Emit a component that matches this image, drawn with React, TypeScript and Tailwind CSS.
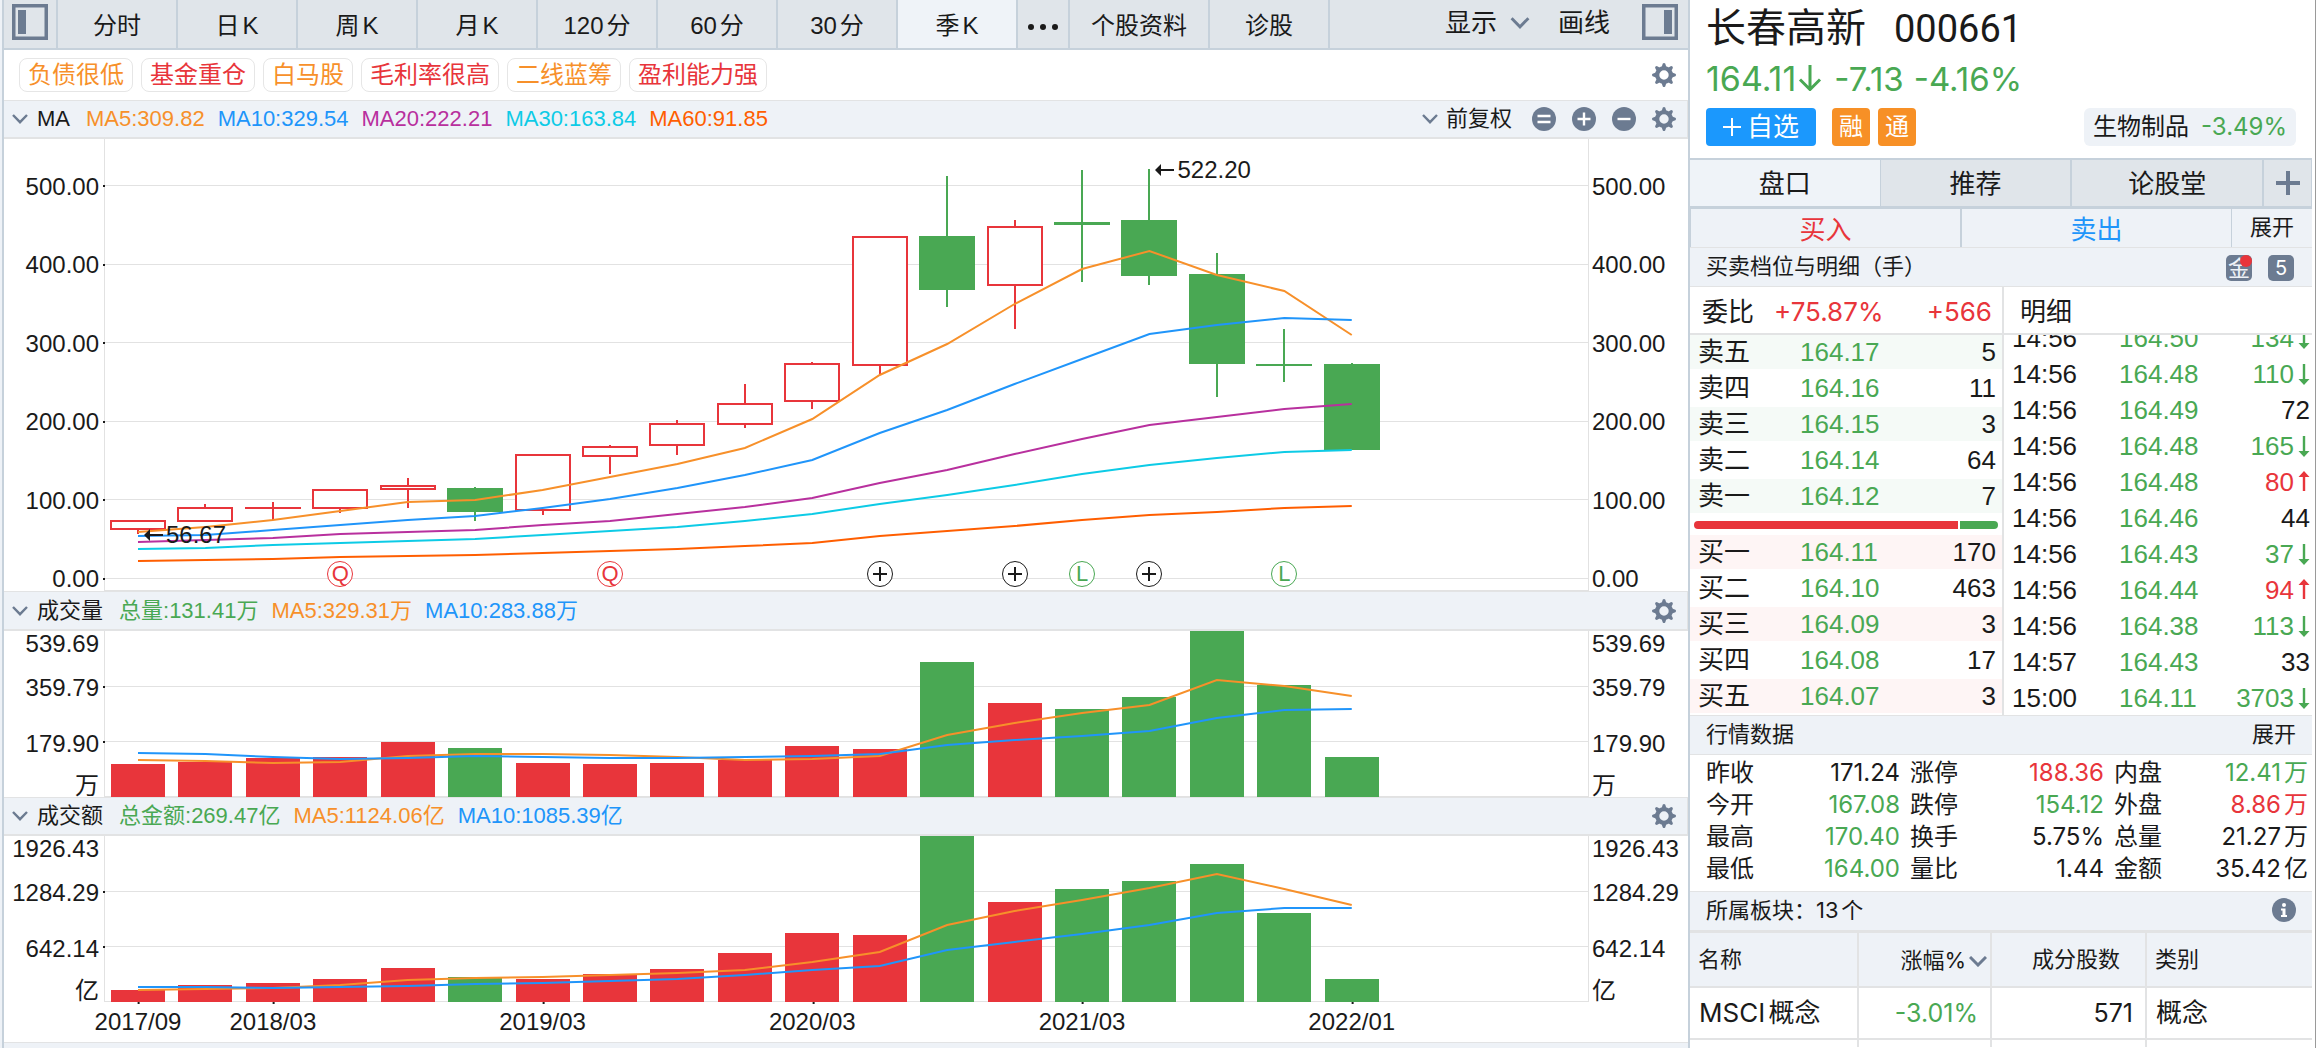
import React from "react";

const RED = "#e8353b";
const GREEN = "#49a853";
const ORANGE = "#f7902a";
const BLUE = "#2095fa";
const PURPLE = "#b8309e";
const CYAN = "#0dcbe6";
const DEEP = "#ff5e00";

const PLOT_W = 1484;
const xAt = (i: number) => 34 + i * 67.43;
const pct = (i: number) => `${(xAt(i) / PLOT_W) * 100}%`;

/* ---------- data ---------- */

// [body top, body bottom, high, low, rising]
const candles: [number, number, number, number, boolean][] = [
  [381, 391, 381, 395, true],
  [368, 383, 365, 383, true],
  [368, 370, 363, 381, true],
  [350, 370, 350, 374, true],
  [346, 351, 339, 369, true],
  [349, 373, 348, 382, false],
  [315, 372, 315, 376, true],
  [307, 318, 306, 335, true],
  [284, 307, 281, 316, true],
  [264, 286, 245, 289, true],
  [224, 263, 223, 270, true],
  [97, 227, 97, 235, true],
  [97, 151, 37, 168, false],
  [87, 147, 81, 190, true],
  [83, 86, 31, 143, false],
  [81, 137, 30, 146, false],
  [135, 225, 114, 258, false],
  [225, 227, 190, 243, false],
  [225, 311, 224, 311, false],
];

const priceLines: [string, number[]][] = [
  [ORANGE, [393, 388, 381, 372, 363, 361, 351, 338, 325, 309, 280, 236, 205, 165, 130, 112, 136, 152, 196]],
  [BLUE, [397, 396, 391, 386, 381, 377, 369, 360, 349, 336, 321, 294, 271, 245, 220, 195, 186, 179, 181]],
  [PURPLE, [403, 401, 399, 395, 393, 391, 386, 382, 375, 368, 359, 344, 331, 315, 300, 286, 278, 270, 265]],
  [CYAN, [410, 409, 406, 404, 402, 400, 396, 392, 388, 382, 375, 365, 356, 346, 335, 326, 319, 313, 311]],
  [DEEP, [422, 421, 420, 418, 417, 416, 414, 412, 410, 407, 404, 397, 392, 387, 381, 376, 373, 369, 367]],
];

const rising = candles.map((c) => c[4]);
const volumeTops = [133, 131, 127, 126, 111, 117, 132, 133, 132, 129, 115, 118, 31, 72, 78, 66, 0, 54, 126];
const volumeLines: [string, number[]][] = [
  [ORANGE, [129, 130, 132, 131, 125, 123, 123, 124, 126, 129, 128, 125, 104, 92, 82, 74, 49, 55, 65]],
  [BLUE, [122, 123, 126, 128, 127, 125, 126, 127, 127, 126, 125, 123, 114, 109, 105, 100, 87, 79, 78]],
];
const amountTops = [154, 149, 147, 143, 132, 141, 143, 138, 133, 117, 97, 99, 0, 66, 53, 45, 28, 77, 143];
const amountLines: [string, number[]][] = [
  [ORANGE, [154, 153, 152, 149, 144, 142, 141, 139, 137, 134, 126, 116, 89, 75, 64, 52, 38, 53, 69]],
  [BLUE, [151, 151, 152, 151, 150, 148, 147, 145, 143, 139, 134, 130, 114, 106, 98, 89, 77, 72, 72]],
];

const dates: [number, string][] = [
  [0, "2017/09"],
  [2, "2018/03"],
  [6, "2019/03"],
  [10, "2020/03"],
  [14, "2021/03"],
  [18, "2022/01"],
];

const marks: [number, "Q" | "+" | "L"][] = [
  [3, "Q"],
  [7, "Q"],
  [11, "+"],
  [13, "+"],
  [14, "L"],
  [15, "+"],
  [17, "L"],
];

const sells = [
  ["卖五", "164.17", "5"],
  ["卖四", "164.16", "11"],
  ["卖三", "164.15", "3"],
  ["卖二", "164.14", "64"],
  ["卖一", "164.12", "7"],
];
const buys = [
  ["买一", "164.11", "170"],
  ["买二", "164.10", "463"],
  ["买三", "164.09", "3"],
  ["买四", "164.08", "17"],
  ["买五", "164.07", "3"],
];
const ticks: [string, string, string, "" | "up" | "down"][] = [
  ["14:56", "164.50", "134", "down"],
  ["14:56", "164.48", "110", "down"],
  ["14:56", "164.49", "72", ""],
  ["14:56", "164.48", "165", "down"],
  ["14:56", "164.48", "80", "up"],
  ["14:56", "164.46", "44", ""],
  ["14:56", "164.43", "37", "down"],
  ["14:56", "164.44", "94", "up"],
  ["14:56", "164.38", "113", "down"],
  ["14:57", "164.43", "33", ""],
  ["15:00", "164.11", "3703", "down"],
];
const K = "text-[#1a1a1a]";
const R = "text-[#e8353b]";
const G = "text-[#49a853]";
const quotes: [string, string, string][] = [
  ["昨收", "171.24", K],
  ["涨停", "188.36", R],
  ["内盘", "12.41万", G],
  ["今开", "167.08", G],
  ["跌停", "154.12", G],
  ["外盘", "8.86万", R],
  ["最高", "170.40", G],
  ["换手", "5.75%", K],
  ["总量", "21.27万", K],
  ["最低", "164.00", G],
  ["量比", "1.44", K],
  ["金额", "35.42亿", K],
];

/* ---------- icons ---------- */

function Gear({ label }: { label: string }) {
  return (
    <button type="button" aria-label={label} className="size-6 shrink-0 text-[#6c7b91]">
      <svg viewBox="0 0 24 24" className="size-6" fill="none" stroke="currentColor">
        <circle cx="12" cy="12" r="6.8" strokeWidth="4.2" />
        {[0, 45, 90, 135, 180, 225, 270, 315].map((a) => (
          <path key={a} d="M9.6 4 10.8 0.6 Q12 -0.6 13.2 0.6 L14.4 4Z" fill="currentColor" stroke="none" transform={`rotate(${a} 12 12)`} />
        ))}
      </svg>
    </button>
  );
}

function Chevron({ big }: { big?: boolean }) {
  return (
    <svg
      viewBox="0 0 16 10"
      className={big ? "h-3 w-5 text-[#6c7b91]" : "h-[10px] w-4 text-[#6c7b91]"}
      fill="none"
      stroke="currentColor"
      strokeWidth="2.4"
    >
      <path d="M1 1 8 8.2 15 1" />
    </svg>
  );
}

function Round({ d, label }: { d: string; label: string }) {
  return (
    <button type="button" aria-label={label} className="size-6">
      <svg viewBox="0 0 24 24" className="size-6">
        <circle cx="12" cy="12" r="12" fill="#6c7b91" />
        <path d={d} stroke="#fff" strokeWidth="2.4" />
      </svg>
    </button>
  );
}

function PanelIcon({ right }: { right?: boolean }) {
  return (
    <svg viewBox="0 0 36 36" className="size-9">
      <rect x="1.75" y="1.75" width="32.5" height="32.5" fill="none" stroke="#6c7b91" strokeWidth="3.5" />
      <rect x={right ? 22 : 6} y="6" width="8" height="24" fill="#6c7b91" />
    </svg>
  );
}

function TickArrow({ up }: { up: boolean }) {
  return (
    <svg viewBox="0 0 12 22" className="ml-1 h-[22px] w-3 shrink-0" fill="currentColor" role="img" aria-label={up ? "升" : "降"}>
      <path d={up ? "M6 0 11.5 6H7.2V20H4.8V6H0.5Z" : "M6 22 11.5 16H7.2V1H4.8V16H0.5Z"} />
    </svg>
  );
}

/* ---------- chart ---------- */

function Series({ lines }: { lines: [string, number[]][] }) {
  return (
    <>
      {lines.map(([color, ys]) => (
        <polyline
          key={color}
          points={ys.map((y, i) => `${xAt(i)},${y}`).join(" ")}
          fill="none"
          stroke={color}
          strokeWidth="2"
          vectorEffect="non-scaling-stroke"
        />
      ))}
    </>
  );
}

function Frame({ height, grid }: { height: number; grid: number[] }) {
  return (
    <g shapeRendering="crispEdges">
      {grid.map((y) => (
        <rect key={y} x="0" y={y} width={PLOT_W} height="1" fill="#e2e2e2" />
      ))}
      <rect x="0" y="0" width="1" height={height} fill="#e2e2e2" />
      <rect x={PLOT_W} y="0" width="1" height={height} fill="#e2e2e2" />
      <rect x="0" y={height - 1} width={PLOT_W} height="1" fill="#e2e2e2" />
      {grid.map((y) => (
        <rect key={y} x="-1" y={y} width="2" height="2" fill="#1a1a1a" />
      ))}
    </g>
  );
}

function CandlePlot() {
  return (
    <div className="relative h-[452px] min-w-0 flex-1">
      <svg viewBox="0 0 1484 452" preserveAspectRatio="none" className="size-full overflow-visible">
        <Frame height={452} grid={[46, 125, 203, 282, 360, 439]} />
        <g shapeRendering="crispEdges">
          {candles.map(([top, bottom, high, low, up], i) => {
            const x = Math.round(xAt(i));
            const color = up ? RED : GREEN;
            const thin = bottom - top <= 3;
            return (
              <g key={i}>
                <rect x={x - 1} y={high} width="2" height={top - high} fill={color} />
                <rect x={x - 1} y={bottom} width="2" height={low - bottom} fill={color} />
                {up && !thin ? (
                  <rect x={x - 27} y={top + 1} width="54" height={bottom - top - 2} fill="#fff" stroke={color} strokeWidth="2" />
                ) : (
                  <rect x={x - 28} y={top} width="56" height={bottom - top} fill={color} />
                )}
              </g>
            );
          })}
        </g>
        <Series lines={priceLines} />
      </svg>
      {marks.map(([i, kind]) => (
        <span
          key={i}
          style={{ left: pct(i) }}
          className={`absolute top-[422px] flex size-[26px] -translate-x-1/2 items-center justify-center rounded-full border bg-white text-[22px] leading-6 ${
            kind === "Q" ? "border-[#e8353b] text-[#e8353b]" : kind === "L" ? "border-[#49a853] text-[#49a853]" : "border-[#1a1a1a] text-[#1a1a1a]"
          }`}
        >
          {kind === "+" ? (
            <svg viewBox="0 0 14 14" className="size-[14px]" stroke="currentColor" strokeWidth="2">
              <path d="M0 7H14M7 0V14" />
            </svg>
          ) : (
            kind
          )}
        </span>
      ))}
      <Extreme index={0} top="top-[384px]" value="56.67" />
      <Extreme index={15} top="top-[19px]" value="522.20" />
    </div>
  );
}

function Extreme({ index, top, value }: { index: number; top: string; value: string }) {
  return (
    <span style={{ left: pct(index) }} className={`absolute ${top} flex items-center gap-[2px] pl-[6px] text-2xl leading-6`}>
      <svg viewBox="0 0 20 12" className="h-3 w-5" fill="#1a1a1a">
        <path d="M0 6 6 0V5H19V7H6V12Z" />
      </svg>
      {value}
    </span>
  );
}

function BarPlot({ tops, lines }: { tops: number[]; lines: [string, number[]][] }) {
  return (
    <div className="h-[166px] min-w-0 flex-1">
      <svg viewBox="0 0 1484 166" preserveAspectRatio="none" className="size-full overflow-visible">
        <Frame height={166} grid={[55, 110]} />
        <g shapeRendering="crispEdges">
          {tops.map((y, i) => (
            <rect key={i} x={Math.round(xAt(i)) - 27} y={y} width="54" height={166 - y} fill={rising[i] ? RED : GREEN} />
          ))}
        </g>
        <Series lines={lines} />
      </svg>
    </div>
  );
}

function PriceAxis({ left }: { left?: boolean }) {
  return (
    <div className={`flex w-[100px] shrink-0 flex-col justify-between pt-9 text-2xl leading-6 ${left ? "pr-[5px] text-right" : "pl-1"}`}>
      {["500.00", "400.00", "300.00", "200.00", "100.00", "0.00"].map((v) => (
        <span key={v}>{v}</span>
      ))}
    </div>
  );
}

function BarAxis({ labels, left }: { labels: string[]; left?: boolean }) {
  return (
    <div className={`flex h-[166px] w-[100px] shrink-0 flex-col pt-[1px] text-2xl leading-6 ${left ? "pr-[5px] text-right" : "pl-1"}`}>
      <span>{labels[0]}</span>
      <span className="mt-5">{labels[1]}</span>
      <span className="mt-8">{labels[2]}</span>
      <span className="mt-[18px]">{labels[3]}</span>
    </div>
  );
}

function ChartHeader({
  title,
  items,
  children,
  tall,
}: {
  title: string;
  items: [string, string][];
  children?: React.ReactNode;
  tall?: boolean;
}) {
  return (
    <div
      className={`flex items-center border-t border-r border-b-2 border-[#e2e3e4] bg-[#eef2f7] pr-[11px] pl-2 text-[22px] leading-7 ${
        tall ? "h-10" : "h-[39px]"
      }`}
    >
      <button type="button" className="flex items-center gap-[9px]">
        <Chevron />
        <span>{title}</span>
      </button>
      <div className="ml-4 flex gap-[13px]">
        {items.map(([text, color]) => (
          <span key={text} className={color}>
            {text}
          </span>
        ))}
      </div>
      <div className="ml-auto flex items-center gap-4">
        {children}
        <Gear label={`${title}设置`} />
      </div>
    </div>
  );
}

/* ---------- left side ---------- */

function TopTabs() {
  const tabs = ["分时", "日K", "周K", "月K", "120分", "60分", "30分", "季K"];
  return (
    <nav className="flex h-[50px] border-b-2 border-[#c6d1db] bg-[#e0e5ea] text-2xl [text-autospace:normal]">
      <button type="button" aria-label="左侧栏" className="flex w-[54px] shrink-0 items-start border-r-2 border-[#c6d1db] pt-1 pl-2">
        <PanelIcon />
      </button>
      {tabs.map((t) => (
        <button key={t} type="button" className={`w-[120px] border-r-2 border-[#c6d1db] pt-[3px] ${t === "季K" ? "bg-[#eff3f8]" : ""}`}>
          {t}
        </button>
      ))}
      <button type="button" aria-label="更多" className="flex w-[52px] items-center justify-center gap-[6px] border-r-2 border-[#c6d1db] pt-[6px]">
        <i className="size-[6px] rounded-full bg-[#1a1a1a]" />
        <i className="size-[6px] rounded-full bg-[#1a1a1a]" />
        <i className="size-[6px] rounded-full bg-[#1a1a1a]" />
      </button>
      <button type="button" className="w-[140px] border-r-2 border-[#c6d1db] pt-[3px]">
        个股资料
      </button>
      <button type="button" className="w-[120px] border-r-2 border-[#c6d1db] pt-[3px]">
        诊股
      </button>
      <div className="ml-auto flex items-start pr-[10px] text-[26px] leading-[46px]">
        <button type="button" className="flex items-center gap-[13px]">
          显示
          <Chevron big />
        </button>
        <button type="button" className="ml-7">
          画线
        </button>
        <button type="button" aria-label="右侧栏" className="mt-1 ml-8">
          <PanelIcon right />
        </button>
      </div>
    </nav>
  );
}

function Tags() {
  const tags: [string, string][] = [
    ["负债很低", "text-[#f7902a]"],
    ["基金重仓", R],
    ["白马股", "text-[#f7902a]"],
    ["毛利率很高", R],
    ["二线蓝筹", "text-[#f7902a]"],
    ["盈利能力强", R],
  ];
  return (
    <div className="flex h-[50px] items-center gap-2 pr-3 pl-[15px]">
      {tags.map(([t, c]) => (
        <span key={t} className={`rounded-lg border border-[#e6e6e6] px-2 text-2xl leading-8 ${c}`}>
          {t}
        </span>
      ))}
      <div className="ml-auto flex">
        <Gear label="标签设置" />
      </div>
    </div>
  );
}

function ChartPanel() {
  return (
    <main className="flex min-w-0 flex-1 flex-col border-l-2 border-[#c6d1db]">
      <TopTabs />
      <Tags />
      <ChartHeader
        title="MA"
        items={[
          ["MA5:309.82", "text-[#f7902a]"],
          ["MA10:329.54", "text-[#2095fa]"],
          ["MA20:222.21", "text-[#b8309e]"],
          ["MA30:163.84", "text-[#0dcbe6]"],
          ["MA60:91.85", "text-[#ff5e00]"],
        ]}
      >
        <button type="button" className="mr-1 flex items-center gap-2">
          <Chevron />
          前复权
        </button>
        <Round label="重置" d="M5.5 9H18.5M5.5 15H18.5" />
        <Round label="放大" d="M5.5 12H18.5M12 5.5V18.5" />
        <Round label="缩小" d="M5.5 12H18.5" />
      </ChartHeader>
      <div className="flex">
        <PriceAxis left />
        <CandlePlot />
        <PriceAxis />
      </div>
      <ChartHeader
        tall
        title="成交量"
        items={[
          ["总量:131.41万", G],
          ["MA5:329.31万", "text-[#f7902a]"],
          ["MA10:283.88万", "text-[#2095fa]"],
        ]}
      />
      <div className="flex">
        <BarAxis left labels={["539.69", "359.79", "179.90", "万"]} />
        <BarPlot tops={volumeTops} lines={volumeLines} />
        <BarAxis labels={["539.69", "359.79", "179.90", "万"]} />
      </div>
      <ChartHeader
        title="成交额"
        items={[
          ["总金额:269.47亿", G],
          ["MA5:1124.06亿", "text-[#f7902a]"],
          ["MA10:1085.39亿", "text-[#2095fa]"],
        ]}
      />
      <div className="flex">
        <BarAxis left labels={["1926.43", "1284.29", "642.14", "亿"]} />
        <BarPlot tops={amountTops} lines={amountLines} />
        <BarAxis labels={["1926.43", "1284.29", "642.14", "亿"]} />
      </div>
      <div className="relative mx-[100px] h-10 text-2xl leading-10">
        {dates.map(([i, d]) => (
          <span key={d} style={{ left: pct(i) }} className="absolute top-0 -translate-x-1/2">
            <i className="absolute top-0 left-1/2 h-[2px] w-[2px] bg-[#1a1a1a]" />
            {d}
          </span>
        ))}
      </div>
      <div className="flex-1 border-t border-[#e2e3e4] bg-[#eef2f7]" />
    </main>
  );
}

/* ---------- right side ---------- */

function StockHeader() {
  return (
    <header className="h-[158px] pr-4 pl-4">
      <h1 className="flex h-14 items-baseline gap-7 text-[40px] leading-[56px]">
        长春高新 <span className="font-[Roboto] text-[38px]">000661</span>
      </h1>
      <p className="flex h-[46px] items-baseline font-[Inter] text-[34px] leading-[46px] text-[#49a853]">
        164.11
        <svg viewBox="0 0 24 26" className="ml-[2px] h-[26px] w-6" fill="none" stroke="currentColor" strokeWidth="3" role="img" aria-label="下跌">
          <path d="M12 0V24M2 14.5 12 24.5 22 14.5" />
        </svg>
        <span className="ml-3 text-[33px]">-7.13</span>
        <span className="ml-[10px] text-[33px]">-4.16%</span>
      </p>
      <div className="mt-[6px] flex h-[38px] items-stretch text-2xl">
        <button type="button" className="flex w-[110px] items-center justify-center gap-[6px] rounded bg-[#1b98fd] text-[26px] leading-8 text-white">
          <svg viewBox="0 0 18 18" className="size-[18px]" stroke="currentColor" strokeWidth="2">
            <path d="M0 9H18M9 0V18" />
          </svg>
          自选
        </button>
        <span className="ml-4 flex w-[38px] items-center justify-center rounded bg-[#f79026] leading-8 text-white">融</span>
        <span className="ml-2 flex w-[38px] items-center justify-center rounded bg-[#f79026] leading-8 text-white">通</span>
        <a href="#industry" className="ml-auto flex items-center gap-3 rounded-md bg-[#eef2f7] px-[9px] leading-8">
          生物制品 <span className="font-[Inter] text-[#49a853]">-3.49%</span>
        </a>
      </div>
    </header>
  );
}

function SectionBar({ title, children }: { title: string; children: React.ReactNode }) {
  return (
    <div className="flex h-10 items-center justify-between border-y border-[#e2e3e4] bg-[#eef2f7] px-4 pb-[2px] font-[Inter,'Noto_Sans_CJK_SC'] text-[22px] leading-7 [text-autospace:normal]">
      <h2>{title}</h2>
      {children}
    </div>
  );
}

function Levels({ rows, tint, label }: { rows: string[][]; tint: string; label: string }) {
  return (
    <table aria-label={label} className="w-full table-fixed border-separate border-spacing-0">
      <tbody>
        {rows.map(([name, price, qty], i) => (
          <tr key={name} className={i % 2 === 0 ? tint : ""}>
            <th scope="row" className="w-[110px] border-b-2 border-white p-0 pl-2 text-left font-normal">
              {name}
            </th>
            <td className="border-b-2 border-white p-0 text-[#49a853]">{price}</td>
            <td className="border-b-2 border-white p-0 pr-[6px] text-right">{qty}</td>
          </tr>
        ))}
      </tbody>
    </table>
  );
}

function Book() {
  return (
    <section className="flex text-[26px] leading-[34px]">
      <div className="w-[312px] shrink-0">
        <div className="flex h-12 items-center border-b-2 border-[#e2e3e4] pt-1 pr-[10px] pl-3">
          委比
          <span className="ml-5 font-[Inter] text-[26px] text-[#e8353b]">+75.87%</span>
          <span className="ml-auto font-[Inter] text-[26px] text-[#e8353b]">+566</span>
        </div>
        <Levels rows={sells} tint="bg-[#f5faf7]" label="卖盘" />
        <div className="mx-1 my-[6px] flex h-2 gap-[2px] overflow-hidden rounded-full">
          <span className="grow-7 bg-[#e8353b]" />
          <span className="grow bg-[#49a853]" />
        </div>
        <Levels rows={buys} tint="bg-[#fef5f5]" label="买盘" />
      </div>
      <div className="flex min-w-0 flex-1 flex-col border-l-2 border-[#e2e3e4]">
        <div className="flex h-12 shrink-0 items-center border-b-2 border-[#e2e3e4] pt-1 pl-4">明细</div>
        <div className="flex h-[380px] flex-col justify-end overflow-hidden">
          <table aria-label="成交明细" className="w-full table-fixed">
            <tbody>
              {ticks.map(([time, price, qty, dir], i) => (
                <tr key={i} className="h-9">
                  <td className="w-[115px] p-0 pt-[2px] pl-2">{time}</td>
                  <td className="w-[86px] p-0 pt-[2px] text-[#49a853]">{price}</td>
                  <td className={`p-0 pt-[2px] pr-[2px] ${dir === "up" ? R : dir === "down" ? G : K}`}>
                    <div className="flex items-center justify-end">
                      {qty}
                      {dir && <TickArrow up={dir === "up"} />}
                    </div>
                  </td>
                </tr>
              ))}
            </tbody>
          </table>
        </div>
      </div>
    </section>
  );
}

function Sectors() {
  const line = "border-r-2 border-[#e2e3e4]";
  return (
    <table className="w-full table-fixed font-[Inter,'Noto_Sans_CJK_SC'] [text-autospace:normal]">
      <thead>
        <tr className="h-[55px] border-y-2 border-[#e2e3e4] bg-[#eef2f7] text-[22px] leading-7">
          <th scope="col" className={`w-[168px] p-0 pb-[2px] pl-2 text-left font-normal ${line}`}>
            名称
          </th>
          <th scope="col" className={`w-[133px] p-0 pr-[3px] font-normal ${line}`}>
            <button type="button" className="ml-auto flex items-center gap-[3px]">
              涨幅%
              <svg viewBox="0 0 18 11" className="mt-1 h-[11px] w-[18px]" fill="none" stroke="#6c7b91" strokeWidth="3">
                <path d="M1 1 9 9 17 1" />
              </svg>
            </button>
          </th>
          <th scope="col" className={`w-[155px] p-0 pr-[25px] pb-[2px] text-right font-normal ${line}`}>
            成分股数
          </th>
          <th scope="col" className="p-0 pb-[2px] pl-2 text-left font-normal">
            类别
          </th>
        </tr>
      </thead>
      <tbody>
        <tr className="h-[52px] border-b-2 border-[#e2e3e4] text-[26px] leading-8">
          <td className={`p-0 pl-[9px] ${line}`}>MSCI概念</td>
          <td className={`p-0 pr-3 text-right text-[25px] text-[#49a853] ${line}`}>-3.01%</td>
          <td className={`p-0 pr-3 text-right text-[25px] ${line}`}>571</td>
          <td className="p-0 pl-[9px]">概念</td>
        </tr>
        <tr className="h-2">
          <td className={`p-0 ${line}`} />
          <td className={`p-0 ${line}`} />
          <td className={`p-0 ${line}`} />
          <td className="p-0" />
        </tr>
      </tbody>
    </table>
  );
}

function QuotePanel() {
  return (
    <aside className="w-[624px] shrink-0 border-l-2 border-[#c6d1db]">
      <StockHeader />
      <div className="flex h-[51px] border-t-2 border-b-3 border-[#c6d1db] bg-[#e0e5ea] text-[26px]">
        <button type="button" className="flex-1 border-r border-[#c6d1db] bg-[#eff3f8] pt-[2px]">
          盘口
        </button>
        <button type="button" className="flex-1 border-r-2 border-[#c6d1db] pt-[2px]">
          推荐
        </button>
        <button type="button" className="flex-1 border-r-2 border-[#c6d1db] pt-[2px]">
          论股堂
        </button>
        <button type="button" aria-label="添加" className="flex w-12 items-center justify-center border-r border-[#c6d1db]">
          <svg viewBox="0 0 24 24" className="size-6" stroke="#6c7b91" strokeWidth="4">
            <path d="M0 12H24M12 0V24" />
          </svg>
        </button>
      </div>
      <div className="flex h-[38px] bg-[#eef2f7] text-[26px] leading-[38px]">
        <button type="button" className="flex-1 border-r-2 border-l border-[#c6d1db] pt-1 leading-[34px] text-[#e8353b]">
          买入
        </button>
        <button type="button" className="flex-1 border-r border-[#c6d1db] pt-1 leading-[34px] text-[#2095fa]">
          卖出
        </button>
        <button type="button" className="w-20 text-[22px]">
          展开
        </button>
      </div>
      <SectionBar title="买卖档位与明细（手）">
        <div className="flex gap-4 pt-1 pr-[2px]">
          <span className="relative flex size-[26px] items-center justify-center rounded-[5px] bg-[#6c7b91] text-[22px] leading-[26px] text-[#eef2f7]">
            金
            <i className="absolute top-0 right-0 size-3 rounded-full bg-[#e8353b]" />
          </span>
          <span className="flex size-[26px] items-center justify-center rounded-[5px] bg-[#6c7b91] text-xl leading-[26px] text-white">5</span>
        </div>
      </SectionBar>
      <Book />
      <SectionBar title="行情数据">
        <button type="button">展开</button>
      </SectionBar>
      <dl className="grid grid-cols-3 gap-x-[10px] pt-[2px] pr-1 pb-[6px] pl-4 font-[Inter,'Noto_Sans_CJK_SC'] text-2xl leading-8 [text-autospace:normal]">
        {quotes.map(([k, v, c]) => (
          <div key={k} className="flex justify-between">
            <dt>{k}</dt>
            <dd className={c}>{v}</dd>
          </div>
        ))}
      </dl>
      <SectionBar title="所属板块：13个">
        <button type="button" aria-label="说明">
          <svg viewBox="0 0 24 24" className="size-6">
            <circle cx="12" cy="12" r="12" fill="#6c7b91" />
            <circle cx="12" cy="7" r="2" fill="#fff" />
            <path d="M9 10.5H13.5V17H15V19H9V17H10.5V12.5H9Z" fill="#fff" />
          </svg>
        </button>
      </SectionBar>
      <Sectors />
    </aside>
  );
}

export default function App() {
  return (
    <div className="flex h-screen min-h-[1048px] min-w-[2100px] overflow-hidden bg-white font-['Liberation_Sans','Noto_Sans_CJK_SC',sans-serif] text-[#1a1a1a]">
      <div className="w-[2px] shrink-0 bg-[#eef2f7]" />
      <ChartPanel />
      <QuotePanel />
      <div className="w-1 shrink-0 border-r border-[#9a9a9a]" />
    </div>
  );
}
